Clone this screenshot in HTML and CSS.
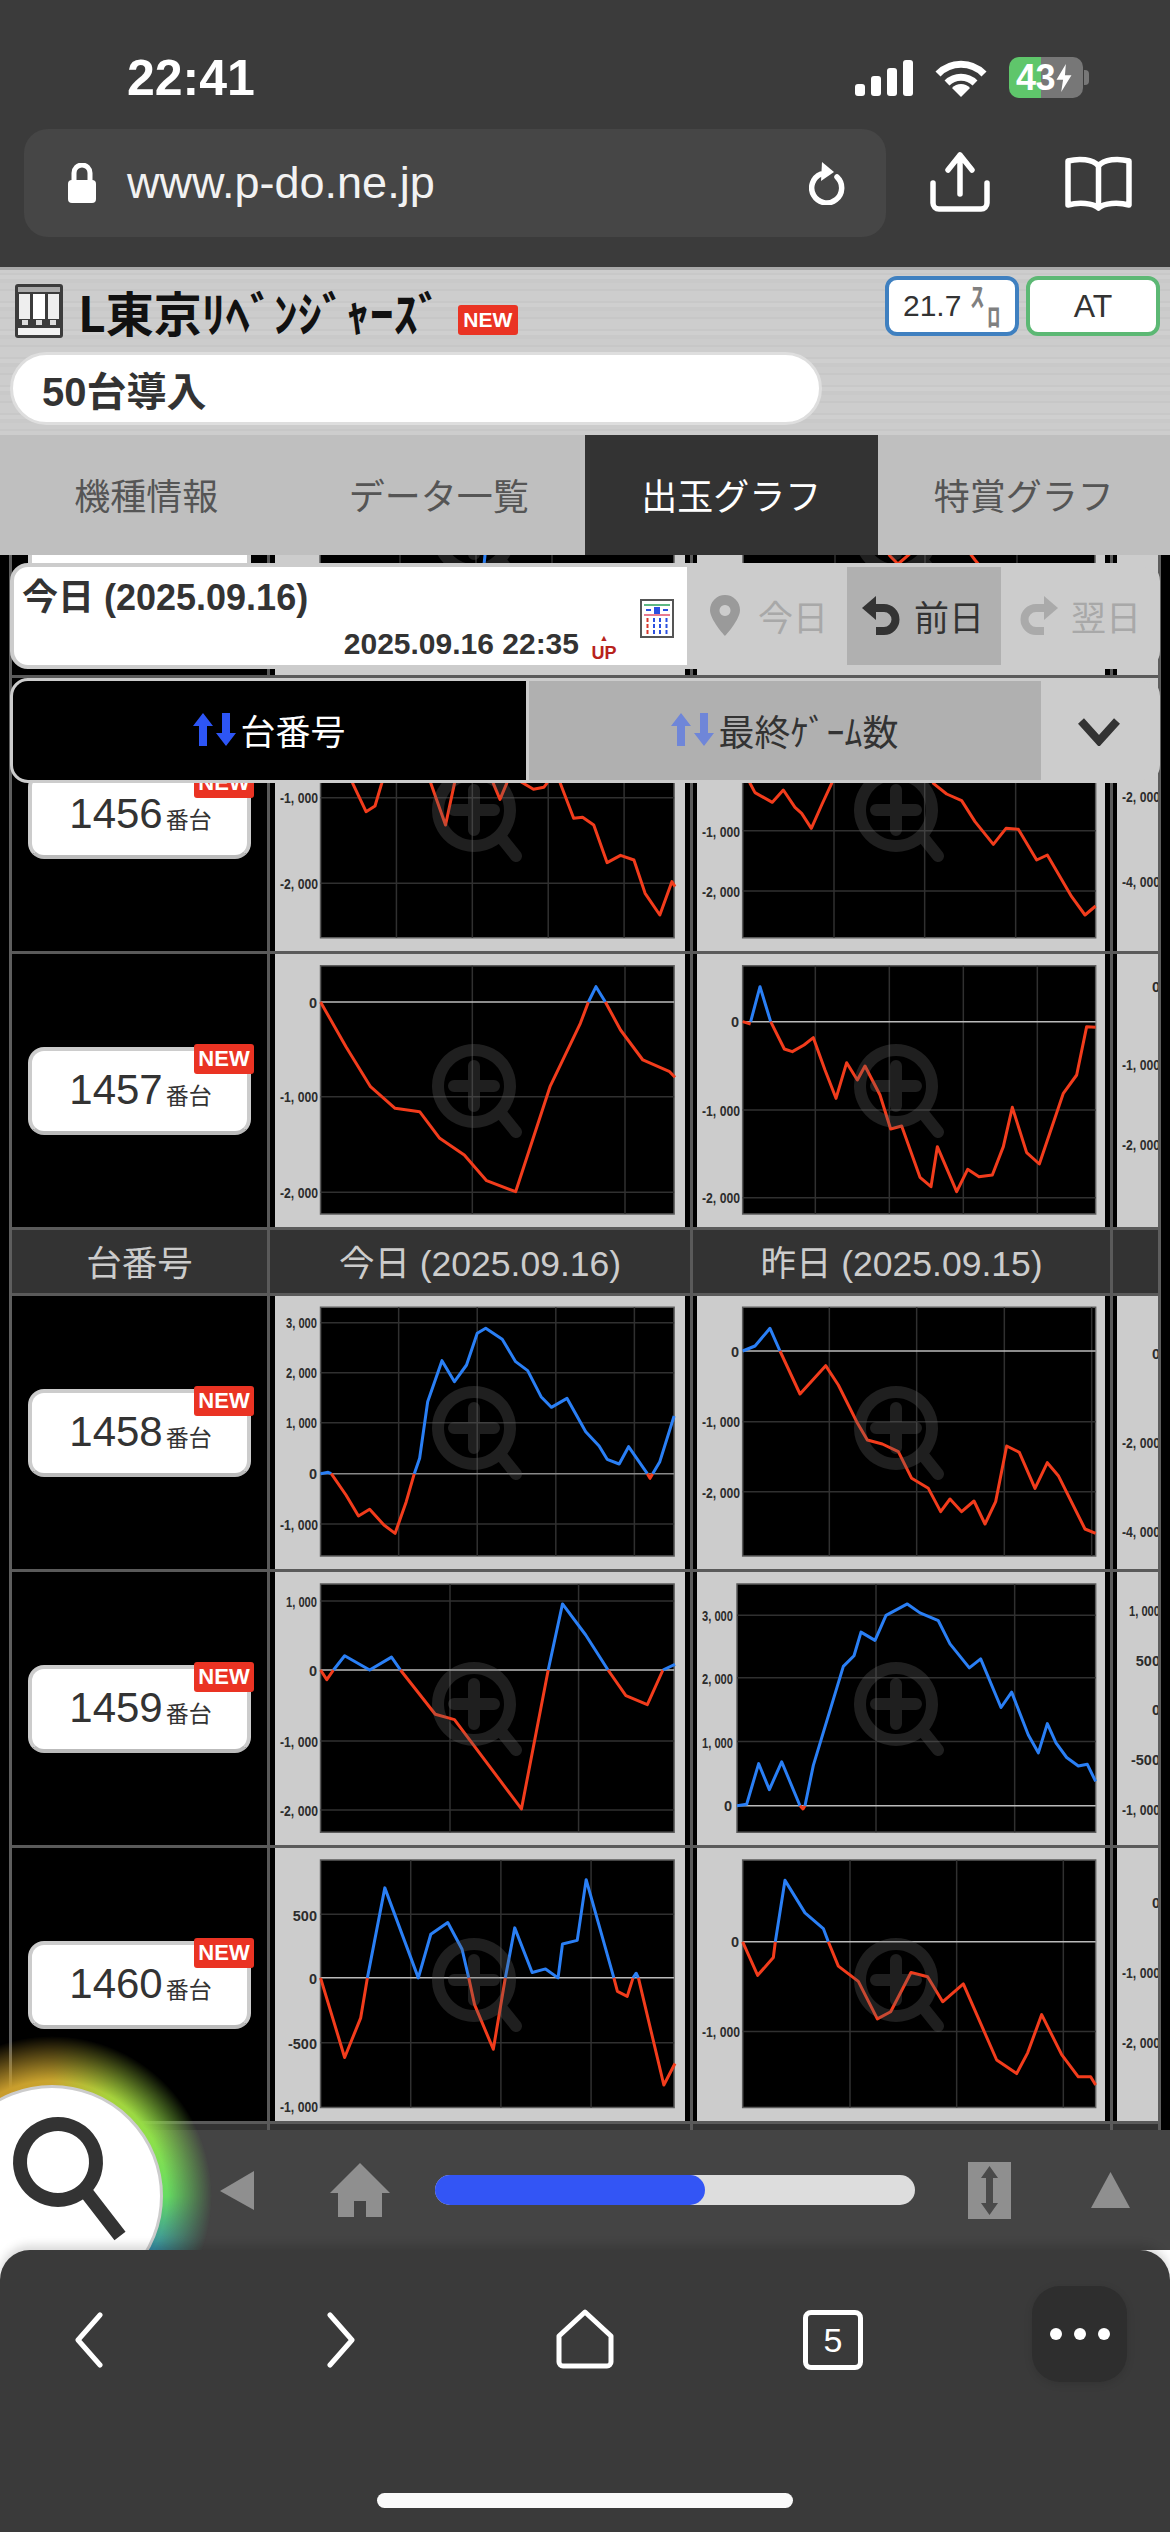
FILE: index.html
```html
<!DOCTYPE html>
<html lang="ja">
<head>
<meta charset="utf-8">
<title>L東京リベンジャーズ 出玉グラフ</title>
<link rel="stylesheet" href="styles.css">
</head>
<body>
<svg class="defs" width="0" height="0" aria-hidden="true">
  <symbol id="mag" viewBox="0 0 90 96">
    <g class="mag-g">
      <path d="M42 6a36 36 0 1 0 .01 0ZM22 42H62M42 22V62M68 68L84 88"/>
    </g>
  </symbol>
</svg>
<div class="app">
  <div class="top">
    <div class="status">
      <span class="time">22:41</span>
      <div class="status-icons">
        <svg class="signal" viewBox="0 0 58 36"><rect x="0" y="24" width="10" height="12" rx="3"/><rect x="16" y="16" width="10" height="20" rx="3"/><rect x="32" y="8" width="10" height="28" rx="3"/><rect x="48" y="0" width="10" height="36" rx="3"/></svg>
        <svg class="wifi" viewBox="0 0 52 38"><path class="wifi-arc" d="M3 15a32 32 0 0 1 46 0M12 24a20 20 0 0 1 28 0"/><path class="wifi-tip" d="M26 38L17 29a12 12 0 0 1 18 0Z"/></svg>
        <div class="battery"><span class="batt-num">43</span><svg class="bolt" viewBox="0 0 16 30"><path d="M10 0L0 17H7L5 30L16 12H9Z"/></svg></div>
      </div>
    </div>
    <div class="urlrow">
      <div class="urlbar">
        <svg class="lock" viewBox="0 0 30 40"><path class="lock-sh" d="M7 19V10a8 8 0 0 1 16 0V19"/><rect x="1" y="17" width="28" height="23" rx="4"/></svg>
        <span class="url">www.p-do.ne.jp</span>
        <svg class="reload" viewBox="0 0 36 44"><path class="ic-line" d="M12 13A15 15 0 1 0 28 16"/><path class="ic-fill" d="M13 1L25 11L12 20Z"/></svg>
      </div>
      <svg class="share" viewBox="0 0 60 60"><path class="ic-line" d="M3 31V51a6 6 0 0 0 6 6H51a6 6 0 0 0 6-6V31M30 3V42M18 18L30 3L42 18"/></svg>
      <svg class="book" viewBox="0 0 67 55"><path class="ic-line" d="M33.500 10C28 3 14 2 3 5V49C14 46 28 47 33.500 52C39 47 53 46 64 49V5C53 2 39 3 33.500 10ZM33.500 10V52"/></svg>
    </div>
  </div>
  <div class="strip"></div>
  <header class="header">
    <div class="title-row">
      <svg class="reel" viewBox="0 0 48 54"><rect width="48" height="54" rx="3" fill="#3c3c3c"/><rect x="3" y="3" width="42" height="5" fill="#aaa"/><rect x="4" y="10" width="11" height="25" fill="#eee"/><rect x="18" y="10" width="12" height="25" fill="#fff"/><rect x="33" y="10" width="11" height="25" fill="#eee"/><rect x="7" y="36" width="6" height="5" fill="#ddd"/><rect x="21" y="36" width="6" height="5" fill="#ddd"/><rect x="35" y="36" width="6" height="5" fill="#ddd"/><rect x="3" y="44" width="42" height="7" fill="#f2f2f2"/></svg>
      <h1 class="machine">L東京ﾘﾍﾞﾝｼﾞｬｰｽﾞ</h1>
      <span class="new new-title">NEW</span>
      <div class="specs">
        <div class="spec spec-blue"><span class="spec-num">21.7</span><span class="unit"><span class="unit-a">ｽ</span><span class="unit-b">ﾛ</span></span></div>
        <div class="spec spec-green">AT</div>
      </div>
    </div>
    <div class="pill">50台導入</div>
  </header>
  <nav class="tabs">
    <span class="tab">機種情報</span>
    <span class="tab">データ一覧</span>
    <span class="tab tab-on">出玉グラフ</span>
    <span class="tab">特賞グラフ</span>
  </nav>

  <main class="content">
    <div class="table">

      <div class="row">
        <div class="label"><div class="num"><span class="new new-num">NEW</span><span class="digits">1455</span><span class="ban">番台</span></div></div>
        <div class="cell c2"><svg class="chart-l" viewBox="275 402 410 273"><rect class="plot" x="320" y="414" width="354" height="248"/><path class="grid" d="M400 414V662M476 414V662M552 414V662"/><polyline class="blue" points="490,500 485,555 483,575"/><use href="#mag" x="432" y="492" width="90" height="96"/></svg></div>
        <div class="cell c3"><svg class="chart-r" viewBox="697 402 408 273"><rect class="plot" x="743" y="414" width="352" height="248"/><path class="grid" d="M835 414V662M925 414V662M1017 414V662"/><polyline class="red" points="880,540 890,556 898,564 912,552 920,540"/><polyline class="red" points="960,540 975,560 985,572"/><use href="#mag" x="854" y="492" width="90" height="96"/></svg></div>
        <div class="cell c4"></div>
      </div>

      <div class="row">
        <div class="label"><div class="num"><span class="new new-num">NEW</span><span class="digits">1456</span><span class="ban">番台</span></div></div>
        <div class="cell c2"><svg class="chart-l" viewBox="275 678 410 273">
          <g transform="matrix(.44643 0 0 .33333 0 770)">
            <rect class="plot" x="718" y="-240" width="792" height="743"/>
            <path class="grid" d="M888 -240V503M1058 -240V503M1228 -240V503M1398 -240V503M718 83H1510M718 340H1510"/>
            <polyline class="red" points="770,-100 790,40 820,125 840,108 855,40 880,-100 950,-100 965,40 998,165 1018,40 1040,-100 1095,-100 1105,40 1120,88 1135,40 1150,-100 1160,30 1195,58 1218,52 1225,40 1240,-100 1255,40 1285,145 1305,142 1330,165 1360,278 1390,256 1420,270 1445,370 1478,435 1505,335 1512,350"/>
          </g>
          <text class="lb" x="318" y="803" textLength="38" lengthAdjust="spacingAndGlyphs">-1, 000</text>
          <text class="lb" x="318" y="889" textLength="38" lengthAdjust="spacingAndGlyphs">-2, 000</text>
          <use href="#mag" x="432" y="768" width="90" height="96"/></svg></div>
        <div class="cell c3"><svg class="chart-r" viewBox="697 678 408 273">
          <g transform="matrix(.33333 0 0 .33333 650 770)">
            <rect class="plot" x="278" y="-240" width="1059" height="743"/>
            <path class="grid" d="M552 -240V503M824 -240V503M1097 -240V503M278 182H1337M278 363H1337"/>
            <polyline class="red" points="290,-100 300,40 315,68 367,97 400,60 435,112 455,130 484,175 515,105 545,40 560,-100 830,-100 850,40 890,72 935,92 975,155 1030,223 1068,175 1105,178 1160,270 1192,255 1265,380 1305,435 1337,408"/>
          </g>
          <text class="lb" x="740" y="837" textLength="38" lengthAdjust="spacingAndGlyphs">-1, 000</text>
          <text class="lb" x="740" y="897" textLength="38" lengthAdjust="spacingAndGlyphs">-2, 000</text>
          <use href="#mag" x="854" y="768" width="90" height="96"/></svg></div>
        <div class="cell c4"><svg class="chart-s" viewBox="1117 678 41 273">
          <text class="lb" x="1160" y="802" textLength="38" lengthAdjust="spacingAndGlyphs">-2, 000</text>
          <text class="lb" x="1160" y="887" textLength="38" lengthAdjust="spacingAndGlyphs">-4, 000</text></svg></div>
      </div>

      <div class="row">
        <div class="label"><div class="num"><span class="new new-num">NEW</span><span class="digits">1457</span><span class="ban">番台</span></div></div>
        <div class="cell c2"><svg class="chart-l" viewBox="275 954 410 273">
          <g transform="matrix(.44643 0 0 .33333 0 770)">
            <rect class="plot" x="718" y="587" width="792" height="745"/>
            <path class="grid" d="M1058 587V1332M1400 587V1332M718 980H1510M718 1267H1510"/>
            <path class="zero" d="M718 696H1510"/>
            <polyline class="red" points="718,696 775,830 830,950 885,1015 940,1025 985,1105 1040,1155 1090,1232 1155,1265 1232,950 1300,760 1318,696"/>
            <polyline class="blue" points="1318,696 1335,650 1356,696"/>
            <polyline class="red" points="1356,696 1390,780 1440,870 1500,905 1512,922"/>
          </g>
          <text class="lb" x="317" y="1008">0</text>
          <text class="lb" x="318" y="1102" textLength="38" lengthAdjust="spacingAndGlyphs">-1, 000</text>
          <text class="lb" x="318" y="1198" textLength="38" lengthAdjust="spacingAndGlyphs">-2, 000</text>
          <use href="#mag" x="432" y="1044" width="90" height="96"/></svg></div>
        <div class="cell c3"><svg class="chart-r" viewBox="697 954 408 273">
          <g transform="matrix(.33333 0 0 .33333 650 770)">
            <rect class="plot" x="278" y="587" width="1059" height="745"/>
            <path class="grid" d="M496 587V1332M718 587V1332M940 587V1332M1162 587V1332M278 1020H1337M278 1283H1337"/>
            <path class="zero" d="M278 755H1337"/>
            <polyline class="red" points="278,755 302,762"/>
            <polyline class="blue" points="302,755 330,650 362,755"/>
            <polyline class="red" points="362,755 403,837 427,845 462,825 490,803 525,900 558,985 590,878 622,930 645,888 690,975 722,1077 755,1068 810,1222 843,1250 862,1130 920,1265 953,1198 987,1220 1027,1215 1060,1130 1087,1012 1130,1148 1168,1182 1240,970 1280,915 1310,770 1337,772"/>
          </g>
          <text class="lb" x="739" y="1027">0</text>
          <text class="lb" x="740" y="1116" textLength="38" lengthAdjust="spacingAndGlyphs">-1, 000</text>
          <text class="lb" x="740" y="1203" textLength="38" lengthAdjust="spacingAndGlyphs">-2, 000</text>
          <use href="#mag" x="854" y="1044" width="90" height="96"/></svg></div>
        <div class="cell c4"><svg class="chart-s" viewBox="1117 954 41 273">
          <text class="lb" x="1160" y="992">0</text>
          <text class="lb" x="1160" y="1070" textLength="38" lengthAdjust="spacingAndGlyphs">-1, 000</text>
          <text class="lb" x="1160" y="1150" textLength="38" lengthAdjust="spacingAndGlyphs">-2, 000</text></svg></div>
      </div>

      <div class="row row-head">
        <div class="hcell">台番号</div>
        <div class="hcell hb c2h">今日 (2025.09.16)</div>
        <div class="hcell hb c3h">昨日 (2025.09.15)</div>
        <div class="hcell hb"></div>
      </div>

      <div class="row">
        <div class="label"><div class="num"><span class="new new-num">NEW</span><span class="digits">1458</span><span class="ban">番台</span></div></div>
        <div class="cell c2"><svg class="chart-l" viewBox="275 1296 410 273">
          <g transform="matrix(.44643 0 0 .33333 0 1270)">
            <rect class="plot" x="718" y="112" width="792" height="746"/>
            <path class="grid" d="M893 112V858M1069 112V858M1245 112V858M1421 112V858M718 158H1510M718 308H1510M718 458H1510M718 762H1510"/>
            <path class="zero zero-dim" d="M718 611H1510"/>
            <polyline class="blue" points="718,611 735,607 742,611"/>
            <polyline class="red" points="742,611 775,675 803,738 828,718 860,765 885,790 910,695 928,611"/>
            <polyline class="blue" points="928,611 940,565 958,395 990,272 1018,335 1045,285 1069,190 1088,175 1125,208 1155,275 1182,302 1212,380 1235,412 1270,385 1312,485 1342,528 1360,568 1387,582 1408,530 1450,611"/>
            <polyline class="red" points="1450,611 1456,625 1462,611"/>
            <polyline class="blue" points="1462,611 1478,575 1510,438"/>
          </g>
          <text class="lb" x="317" y="1328" textLength="31" lengthAdjust="spacingAndGlyphs">3, 000</text>
          <text class="lb" x="317" y="1378" textLength="31" lengthAdjust="spacingAndGlyphs">2, 000</text>
          <text class="lb" x="317" y="1428" textLength="31" lengthAdjust="spacingAndGlyphs">1, 000</text>
          <text class="lb" x="317" y="1479">0</text>
          <text class="lb" x="318" y="1530" textLength="38" lengthAdjust="spacingAndGlyphs">-1, 000</text>
          <use href="#mag" x="432" y="1386" width="90" height="96"/></svg></div>
        <div class="cell c3"><svg class="chart-r" viewBox="697 1296 408 273">
          <g transform="matrix(.33333 0 0 .33333 650 1270)">
            <rect class="plot" x="278" y="112" width="1059" height="746"/>
            <path class="grid" d="M538 112V858M800 112V858M1063 112V858M1325 112V858M278 455H1337M278 665H1337"/>
            <path class="zero" d="M278 243H1337"/>
            <polyline class="blue" points="278,243 315,228 360,175 390,243"/>
            <polyline class="red" points="390,243 450,372 527,287 565,345 620,455 652,510 697,522 745,545 785,625 835,655 872,725 900,687 935,725 972,693 1005,762 1037,695 1070,528 1108,547 1155,655 1192,578 1225,617 1305,777 1337,790"/>
          </g>
          <text class="lb" x="739" y="1357">0</text>
          <text class="lb" x="740" y="1427" textLength="38" lengthAdjust="spacingAndGlyphs">-1, 000</text>
          <text class="lb" x="740" y="1498" textLength="38" lengthAdjust="spacingAndGlyphs">-2, 000</text>
          <use href="#mag" x="854" y="1386" width="90" height="96"/></svg></div>
        <div class="cell c4"><svg class="chart-s" viewBox="1117 1296 41 273">
          <text class="lb" x="1160" y="1359">0</text>
          <text class="lb" x="1160" y="1448" textLength="38" lengthAdjust="spacingAndGlyphs">-2, 000</text>
          <text class="lb" x="1160" y="1537" textLength="38" lengthAdjust="spacingAndGlyphs">-4, 000</text></svg></div>
      </div>

      <div class="row">
        <div class="label"><div class="num"><span class="new new-num">NEW</span><span class="digits">1459</span><span class="ban">番台</span></div></div>
        <div class="cell c2"><svg class="chart-l" viewBox="275 1572 410 273">
          <g transform="matrix(.44643 0 0 .35714 0 1560)">
            <rect class="plot" x="718" y="67" width="792" height="695"/>
            <path class="grid" d="M1008 67V762M1296 67V762M718 115H1510M718 507H1510M718 700H1510"/>
            <path class="zero" d="M718 308H1510"/>
            <polyline class="red" points="718,308 732,335 747,308"/>
            <polyline class="blue" points="747,308 772,268 828,308 877,272 897,308"/>
            <polyline class="red" points="897,308 975,432 1018,447 1168,697 1228,308"/>
            <polyline class="blue" points="1228,308 1260,123 1312,210 1362,308"/>
            <polyline class="red" points="1362,308 1402,380 1450,405 1485,308"/>
            <polyline class="blue" points="1485,308 1512,292"/>
          </g>
          <text class="lb" x="317" y="1607" textLength="31" lengthAdjust="spacingAndGlyphs">1, 000</text>
          <text class="lb" x="317" y="1676">0</text>
          <text class="lb" x="318" y="1747" textLength="38" lengthAdjust="spacingAndGlyphs">-1, 000</text>
          <text class="lb" x="318" y="1816" textLength="38" lengthAdjust="spacingAndGlyphs">-2, 000</text>
          <use href="#mag" x="432" y="1662" width="90" height="96"/></svg></div>
        <div class="cell c3"><svg class="chart-r" viewBox="697 1572 408 273">
          <g transform="matrix(.33333 0 0 .35714 650 1560)">
            <rect class="plot" x="261" y="67" width="1076" height="695"/>
            <path class="grid" d="M678 67V762M1094 67V762M261 155H1337M261 330H1337M261 508H1337"/>
            <path class="zero" d="M261 688H1337"/>
            <polyline class="blue" points="261,688 290,684 326,570 358,643 395,565 450,688"/>
            <polyline class="red" points="450,688 459,697 465,688"/>
            <polyline class="blue" points="465,688 490,575 580,298 612,268 633,202 675,225 708,155 772,123 810,148 865,170 900,235 958,302 992,277 1053,413 1085,370 1135,490 1165,540 1192,458 1218,512 1250,553 1285,577 1312,572 1337,620"/>
          </g>
          <text class="lb" x="733" y="1621" textLength="31" lengthAdjust="spacingAndGlyphs">3, 000</text>
          <text class="lb" x="733" y="1684" textLength="31" lengthAdjust="spacingAndGlyphs">2, 000</text>
          <text class="lb" x="733" y="1748" textLength="31" lengthAdjust="spacingAndGlyphs">1, 000</text>
          <text class="lb" x="732" y="1811">0</text>
          <use href="#mag" x="854" y="1662" width="90" height="96"/></svg></div>
        <div class="cell c4"><svg class="chart-s" viewBox="1117 1572 41 273">
          <text class="lb" x="1160" y="1616" textLength="31" lengthAdjust="spacingAndGlyphs">1, 000</text>
          <text class="lb" x="1160" y="1666">500</text>
          <text class="lb" x="1160" y="1715">0</text>
          <text class="lb" x="1160" y="1765">-500</text>
          <text class="lb" x="1160" y="1815" textLength="38" lengthAdjust="spacingAndGlyphs">-1, 000</text></svg></div>
      </div>

      <div class="row">
        <div class="label"><div class="num"><span class="new new-num">NEW</span><span class="digits">1460</span><span class="ban">番台</span></div></div>
        <div class="cell c2"><svg class="chart-l" viewBox="275 1848 410 273">
          <g transform="matrix(.44643 0 0 .35714 0 1560)">
            <rect class="plot" x="718" y="840" width="792" height="693"/>
            <path class="grid" d="M920 840V1533M1122 840V1533M1324 840V1533M718 992H1510M718 1352H1510"/>
            <path class="zero" d="M718 1170H1510"/>
            <polyline class="red" points="718,1170 772,1393 808,1282 823,1170"/>
            <polyline class="blue" points="823,1170 862,918 937,1170 965,1048 1003,1015 1035,1090 1050,1170"/>
            <polyline class="red" points="1050,1170 1063,1245 1105,1370 1132,1170"/>
            <polyline class="blue" points="1132,1170 1153,1030 1192,1155 1222,1145 1250,1170 1260,1075 1293,1065 1313,895 1375,1170"/>
            <polyline class="red" points="1375,1170 1383,1208 1405,1222 1418,1170"/>
            <polyline class="blue" points="1418,1170 1425,1157 1430,1170"/>
            <polyline class="red" points="1430,1170 1487,1470 1512,1410"/>
          </g>
          <text class="lb" x="317" y="1921">500</text>
          <text class="lb" x="317" y="1984">0</text>
          <text class="lb" x="317" y="2049">-500</text>
          <text class="lb" x="318" y="2112" textLength="38" lengthAdjust="spacingAndGlyphs">-1, 000</text>
          <use href="#mag" x="432" y="1938" width="90" height="96"/></svg></div>
        <div class="cell c3"><svg class="chart-r" viewBox="697 1848 408 273">
          <g transform="matrix(.33333 0 0 .35714 650 1560)">
            <rect class="plot" x="278" y="840" width="1059" height="693"/>
            <path class="grid" d="M600 840V1533M920 840V1533M1240 840V1533M278 1320H1337"/>
            <path class="zero" d="M278 1069H1337"/>
            <polyline class="red" points="278,1069 323,1163 370,1113 376,1069"/>
            <polyline class="blue" points="376,1069 405,897 465,988 520,1032 535,1069"/>
            <polyline class="red" points="535,1069 565,1137 625,1180 682,1285 722,1265 783,1155 833,1167 878,1237 940,1187 1040,1400 1100,1438 1133,1380 1175,1273 1235,1385 1285,1447 1322,1447 1337,1470"/>
          </g>
          <text class="lb" x="739" y="1947">0</text>
          <text class="lb" x="740" y="2037" textLength="38" lengthAdjust="spacingAndGlyphs">-1, 000</text>
          <use href="#mag" x="854" y="1938" width="90" height="96"/></svg></div>
        <div class="cell c4"><svg class="chart-s" viewBox="1117 1848 41 273">
          <text class="lb" x="1160" y="1908">0</text>
          <text class="lb" x="1160" y="1978" textLength="38" lengthAdjust="spacingAndGlyphs">-1, 000</text>
          <text class="lb" x="1160" y="2048" textLength="38" lengthAdjust="spacingAndGlyphs">-2, 000</text></svg></div>
      </div>

      <div class="row row-head">
        <div class="hcell"></div><div class="hcell hb"></div><div class="hcell hb"></div><div class="hcell hb"></div>
      </div>
    </div>

    <section class="date-panel">
      <div class="date-info">
        <div class="date-title">今日 (2025.09.16)</div>
        <div class="date-stamp"><span>2025.09.16 22:35</span><span class="up"><span class="up-arrow">▲</span><span class="up-text">UP</span></span></div>
        <svg class="cal" viewBox="0 0 34 39"><rect x="1" y="1" width="32" height="37" fill="#fff" stroke="#555" stroke-width="2"/><rect x="4" y="5" width="26" height="2" fill="#5cb884"/><rect x="14" y="8" width="6" height="7" fill="#2b50e0"/><rect x="6" y="10" width="5" height="2" fill="#2b50e0"/><rect x="23" y="10" width="5" height="2" fill="#2b50e0"/><rect x="4" y="15" width="26" height="2" fill="#e87a90"/><path d="M7.500 19V23M7.500 25V29M7.500 31V35" stroke="#d9352a" stroke-width="2"/><path d="M14 19V23M14 25V29M14 31V35M20 19V23M20 25V29M20 31V35M26.500 19V23M26.500 25V29M26.500 31V35" stroke="#2b50e0" stroke-width="2"/></svg>
      </div>
      <div class="day day-a">
        <svg class="pin" viewBox="0 0 30 41"><path fill-rule="evenodd" d="M15 0A15 15 0 0 0 0 15C0 25 15 41 15 41S30 25 30 15A15 15 0 0 0 15 0ZM15 10a5.500 5.500 0 1 1-.01 0Z"/></svg>
        <span>今日</span>
      </div>
      <div class="day day-on">
        <svg class="uturn" viewBox="0 0 38 42"><path class="uturn-l" d="M10 14H22a11 11 0 0 1 0 23H14"/><path class="uturn-h" d="M0 14L14 2V26Z"/></svg>
        <span>前日</span>
      </div>
      <div class="day day-c">
        <svg class="uturn uturn-m" viewBox="0 0 38 42"><path class="uturn-l" d="M10 14H22a11 11 0 0 1 0 23H14"/><path class="uturn-h" d="M0 14L14 2V26Z"/></svg>
        <span>翌日</span>
      </div>
    </section>

    <section class="sort-panel">
      <div class="sort sort-on">
        <svg class="sort-ic" viewBox="0 0 43 33"><path d="M10 0L20 13H14V33H6V13H0Z"/><path d="M33 33L23 20H29V0H37V20H43Z"/></svg>
        <span>台番号</span>
      </div>
      <div class="sort sort-off">
        <svg class="sort-ic sort-ic-dim" viewBox="0 0 43 33"><path d="M10 0L20 13H14V33H6V13H0Z"/><path d="M33 33L23 20H29V0H37V20H43Z"/></svg>
        <span>最終ｹﾞｰﾑ数</span>
      </div>
      <div class="sort-more"><svg class="chev" viewBox="0 0 44 30"><path d="M4 5L22 25L40 5"/></svg></div>
    </section>
  </main>

  <div class="navbar">
    <svg class="nav-left" viewBox="0 0 34 39"><path d="M34 0V39L0 20Z"/></svg>
    <svg class="nav-home" viewBox="0 0 60 54"><path d="M30 0L60 30H52V54H36V38H24V54H8V30H0Z"/></svg>
    <div class="progress"><div class="progress-fill"></div></div>
    <svg class="nav-ud" viewBox="0 0 43 57"><rect width="43" height="57"/><path class="ud-a" d="M21.500 4L30 16H25V41H30L21.500 53L13 41H18V16H13Z"/></svg>
    <svg class="nav-up" viewBox="0 0 39 36"><path d="M19.500 0L39 36H0Z"/></svg>
  </div>

  <div class="toolbar-wrap">
    <div class="toolbar">
      <div class="tool-row">
        <svg class="tb-back" viewBox="0 0 28 56"><path class="tb-line" d="M25 3L3 28L25 53"/></svg>
        <svg class="tb-fwd" viewBox="0 0 28 56"><path class="tb-line" d="M3 3L25 28L3 53"/></svg>
        <svg class="tb-home" viewBox="0 0 58 60"><path class="tb-line" d="M29 3L55 27V53a4 4 0 0 1-4 4H7a4 4 0 0 1-4-4V27Z"/></svg>
        <div class="tb-tabs">5</div>
        <div class="tb-menu"><i></i><i></i><i></i></div>
      </div>
      <div class="indicator"></div>
    </div>
  </div>

  <div class="glow"></div>
  <div class="fab">
    <svg class="fab-mag" viewBox="0 0 120 130"><path d="M46 8a38 38 0 1 0 .01 0ZM74 76L108 120"/></svg>
  </div>
</div>
</body>
</html>
```

FILE: styles.css
```css
* { box-sizing: border-box; }
html, body { margin: 0; padding: 0; background: #000; }
body { font-family: "Liberation Sans", "Noto Sans CJK JP", sans-serif; }
.defs { position: absolute; }
.app { position: relative; width: 1170px; height: 2532px; overflow: hidden; display: flex; flex-direction: column; background: #000; }

/* browser top */
.top { height: 267px; background: #3b3b3b; color: #fff; flex: none; }
.status { height: 129px; display: flex; align-items: flex-start; padding: 52px 87px 0 127px; }
.time { font-size: 50px; line-height: 52px; font-weight: 700; letter-spacing: 0; }
.status-icons { margin-left: auto; display: flex; align-items: flex-start; padding-top: 5px; }
.signal { width: 58px; height: 36px; margin-top: 3px; fill: #fff; }
.wifi { width: 52px; height: 38px; margin: 2px 0 0 22px; }
.wifi-arc { fill: none; stroke: #fff; stroke-width: 7; }
.wifi-tip { fill: #fff; }
.battery { position: relative; width: 74px; height: 41px; margin-left: 22px; border-radius: 10px; background: linear-gradient(90deg, #5fc66b 0 32px, #777 32px); display: flex; align-items: center; padding-left: 7px; }
.battery::after { content: ""; position: absolute; right: -6px; top: 13px; width: 5px; height: 15px; border-radius: 0 4px 4px 0; background: #777; }
.batt-num { font-size: 36px; font-weight: 700; color: #fff; letter-spacing: -.5px; line-height: 41px; }
.bolt { width: 16px; height: 28px; margin-left: 1px; fill: #fff; }
.urlrow { display: flex; align-items: flex-start; padding-left: 24px; }
.urlbar { width: 862px; height: 108px; border-radius: 24px; background: #464646; display: flex; align-items: center; }
.lock { width: 30px; height: 40px; margin-left: 43px; fill: #fff; }
.lock-sh { fill: none; stroke: #fff; stroke-width: 5; }
.url { font-size: 45px; margin-left: 30px; color: #f2f2f2; }
.reload { width: 36px; height: 44px; margin-left: auto; margin-right: 41px; }
.ic-line { fill: none; stroke: #fff; stroke-width: 5.500; stroke-linecap: round; stroke-linejoin: round; }
.ic-fill { fill: #fff; }
.share { width: 60px; height: 60px; margin: 23px 0 0 44px; }
.book { width: 67px; height: 55px; margin: 27px 0 0 75px; }
.strip { height: 3px; background: #a9a9a9; flex: none; }

/* page header */
.header { height: 165px; flex: none; background: repeating-linear-gradient(180deg, #cdcdcd 0 3px, #c8c8c8 3px 5px, #cfcfcf 5px 9px, #c9c9c9 9px 13px, #cccccc 13px 19px, #c7c7c7 19px 21px, #cdcdcd 21px 28px); }
.title-row { height: 82px; display: flex; align-items: flex-start; padding-left: 15px; }
.reel { width: 48px; height: 54px; margin-top: 14px; flex: none; }
.machine { margin: 12px 0 0 15px; font-family: "Noto Sans CJK JP", sans-serif; font-size: 48px; line-height: 58px; font-weight: 700; color: #111; white-space: nowrap; }
.new { display: flex; align-items: center; justify-content: center; background: #ea3323; color: #fff; font-family: "Liberation Sans", sans-serif; font-weight: 700; border-radius: 3px; }
.new-title { width: 60px; height: 30px; font-size: 21px; margin: 35px 0 0 16px; }
.specs { margin-left: auto; display: flex; gap: 7px; padding: 6px 10px 0 0; }
.spec { width: 134px; height: 60px; border-radius: 12px; background: #fff; display: flex; align-items: center; justify-content: center; color: #333; font-size: 32px; }
.spec-blue { border: 4px solid #3f80c0; justify-content: flex-start; padding-left: 14px; }
.spec-green { border: 4px solid #5cb874; }
.spec-num { font-size: 30px; }
.unit { display: flex; flex-direction: column; width: 30px; margin-left: 9px; color: #808080; font-family: "Noto Sans CJK JP", sans-serif; font-weight: 700; font-size: 27px; line-height: 20px; }
.unit-a { align-self: flex-start; }
.unit-b { align-self: flex-end; }
.pill { width: 812px; height: 73px; margin-left: 10px; border: 3px solid #dedede; border-radius: 37px; background: #fff; display: flex; align-items: center; padding-left: 29px; font-family: "Liberation Sans", "Noto Sans CJK JP", sans-serif; font-weight: 700; font-size: 40px; color: #333; }

/* tabs */
.tabs { height: 120px; flex: none; display: grid; grid-template-columns: repeat(4, 292.500px); background: #bfbfbf; }
.tab { display: flex; align-items: center; justify-content: center; padding-bottom: 3px; font-family: "Noto Sans CJK JP", sans-serif; font-size: 36px; color: #555; white-space: nowrap; }
.tab-on { background: #333; color: #fff; }

/* table */
.content { position: relative; height: 1575px; flex: none; overflow: hidden; background: #000; }
.table { width: 1152px; margin: -156px 0 0 9px; border-left: 3px solid #5e5e5e; border-right: 3px solid #5e5e5e; }
.row { display: grid; grid-template-columns: 255px 423px 420px 48px; height: 276px; border-top: 3px solid #5a5a5a; background: #000; }
.label { display: flex; align-items: flex-start; justify-content: center; padding-top: 93px; }
.num { position: relative; width: 223px; height: 88px; border: 4px solid #ccc; border-bottom-color: #bbb; border-radius: 16px; background: #fff; display: flex; align-items: baseline; justify-content: center; padding-top: 14px; padding-left: 2px; color: #333; }
.digits { font-size: 42px; line-height: 50px; }
.ban { font-family: "Noto Sans CJK JP", sans-serif; font-size: 23px; margin-left: 3px; }
.new-num { position: absolute; right: -7px; top: -7px; width: 60px; height: 30px; font-size: 22px; }
.cell { border-left: 3px solid #5a5a5a; height: 273px; }
.c2 { padding: 0 5px; }
.c3 { padding: 0 5px 0 4px; }
.c4 { padding-left: 4px; }
.c4:empty::before { content: ""; display: block; height: 273px; background: #ccc; }
.chart-l, .chart-r, .chart-s { display: block; height: 273px; background: #ccc; }
.chart-l { width: 410px; }
.chart-r { width: 408px; }
.chart-s { width: 41px; }
.plot { fill: #000; stroke: #5c5c5c; stroke-width: 1.500; vector-effect: non-scaling-stroke; }
.grid { fill: none; stroke: #303030; stroke-width: 1.500; vector-effect: non-scaling-stroke; }
.zero { fill: none; stroke: #bbb; stroke-width: 1.500; vector-effect: non-scaling-stroke; }
.zero-dim { stroke: #888; }
.red, .blue { fill: none; stroke-width: 3; stroke-linejoin: round; vector-effect: non-scaling-stroke; }
.red { stroke: #f23c1c; }
.blue { stroke: #2a7ff5; }
.lb { font-family: "Liberation Sans", sans-serif; font-weight: 700; font-size: 14.500px; fill: #2c2c2c; text-anchor: end; }
.mag-g { fill: none; stroke: #666; stroke-width: 12; stroke-linecap: round; opacity: .3; }
.row-head { height: 66px; background: #333; }
.hcell { display: flex; align-items: center; justify-content: center; height: 63px; padding-bottom: 3px; background: #333; color: #ccc; font-family: "Liberation Sans", "Noto Sans CJK JP", sans-serif; font-size: 35.500px; white-space: nowrap; }
.hb { border-left: 3px solid #5a5a5a; }

/* date panel */
.date-panel { position: absolute; left: 10px; top: 8px; width: 1150px; height: 106px; border: 4px solid #ccc; border-radius: 18px; background: #ccc; overflow: hidden; display: flex; }
.date-info { position: relative; width: 673px; background: #fff; color: #333; padding-left: 8px; flex: none; }
.date-title { font-size: 36px; line-height: 44px; font-weight: 700; margin-top: 9px; font-family: "Liberation Sans", "Noto Sans CJK JP", sans-serif; white-space: nowrap; }
.date-stamp { display: flex; justify-content: flex-end; align-items: flex-end; padding-right: 69px; font-size: 30px; line-height: 36px; font-weight: 700; margin-top: 6px; }
.up { display: flex; flex-direction: column; align-items: center; color: #b8231c; margin-left: 11px; width: 28px; }
.up-arrow { font-size: 9px; line-height: 11px; }
.up-text { font-size: 18px; line-height: 18px; }
.cal { position: absolute; right: 13px; top: 32px; width: 34px; height: 39px; }
.day { display: flex; align-items: center; padding-bottom: 2px; font-family: "Noto Sans CJK JP", sans-serif; font-size: 35px; color: #a8a8a8; }
.day-a { width: 160px; padding-left: 23px; gap: 18px; }
.day-on { width: 154px; padding-left: 15px; gap: 14px; background: #b0b0b0; color: #333; }
.day-c { width: 155px; padding-left: 19px; gap: 13px; }
.pin { width: 30px; height: 41px; fill: #9a9a9a; }
.uturn { width: 38px; height: 42px; }
.uturn-l { fill: none; stroke: #333; stroke-width: 8; }
.uturn-h { fill: #333; }
.uturn-m { transform: scaleX(-1); }
.uturn-m .uturn-l { stroke: #aaa; }
.uturn-m .uturn-h { fill: #aaa; }

/* sort panel */
.sort-panel { position: absolute; left: 10px; top: 123px; width: 1150px; height: 105px; border: 3px solid #ccc; border-radius: 18px; background: #ccc; overflow: hidden; display: flex; }
.sort { display: flex; align-items: center; justify-content: center; font-family: "Noto Sans CJK JP", sans-serif; font-size: 35px; gap: 4px; padding-bottom: 2px; }
.sort-on { width: 513px; background: #000; color: #fff; }
.sort-off { width: 512px; margin-left: 3px; background: #b0b0b0; color: #333; font-size: 36px; }
.sort-ic { width: 43px; height: 33px; fill: #2d55f5; }
.sort-ic-dim { fill: #6f86d8; }
.sort-more { flex: 1; display: flex; align-items: center; justify-content: center; }
.chev { width: 44px; height: 30px; fill: none; stroke: #333; stroke-width: 8; }

/* page nav */
.navbar { height: 120px; flex: none; background: #444; display: flex; align-items: center; padding-left: 220px; position: relative; }
.nav-left { width: 34px; height: 39px; fill: #8f8f8f; }
.nav-home { width: 60px; height: 54px; margin-left: 76px; fill: #8f8f8f; }
.progress { width: 480px; height: 30px; margin-left: 45px; border-radius: 15px; background: #ddd; overflow: hidden; }
.progress-fill { width: 270px; height: 30px; border-radius: 0 15px 15px 0; background: #3355f5; }
.nav-ud { width: 43px; height: 57px; margin-left: 53px; fill: #8f8f8f; }
.ud-a { fill: #4a4a4a; }
.nav-up { width: 39px; height: 36px; margin-left: 80px; fill: #8f8f8f; }

/* bottom toolbar */
.toolbar-wrap { flex: 1; background: #fff; position: relative; z-index: 3; }
.toolbar { height: 282px; background: #3a3a3a; border-radius: 30px 30px 0 0; padding-top: 36px; box-shadow: 0 -5px 10px rgba(0, 0, 0, .15); }
.tool-row { position: relative; display: flex; align-items: flex-start; height: 96px; padding-left: 75px; }
.tb-line { fill: none; stroke: #fff; stroke-width: 5; stroke-linecap: round; stroke-linejoin: round; }
.tb-back, .tb-fwd { width: 28px; height: 56px; margin-top: 26px; }
.tb-fwd { margin-left: 224px; }
.tb-home { width: 58px; height: 60px; margin: 23px 0 0 201px; }
.tb-tabs { width: 60px; height: 60px; margin: 24px 0 0 189px; border: 5px solid #fff; border-radius: 8px; color: #fff; font-size: 34px; display: flex; align-items: center; justify-content: center; }
.tb-menu { width: 95px; height: 96px; margin-left: 169px; border-radius: 28px; background: #2e2e2e; display: flex; align-items: center; justify-content: center; gap: 12px; padding-bottom: 0; box-shadow: 0 2px 8px rgba(0, 0, 0, .12); }
.tb-menu i { display: block; width: 12px; height: 12px; border-radius: 50%; background: #fff; }
.indicator { width: 416px; height: 15px; margin: 111px auto 0; border-radius: 8px; background: #fafafa; }

/* search button */
.glow { position: absolute; left: -108px; top: 2036px; width: 320px; height: 320px; border-radius: 50%; z-index: 1; background: conic-gradient(#c9a52f 0deg, #a8d23c 30deg, #8fe04a 60deg, #66dc62 90deg, #2f7fae 122deg, #2a5fb0 150deg, #c9902a 300deg, #c9a52f 360deg); -webkit-mask-image: radial-gradient(circle closest-side, #000 72%, transparent 100%); mask-image: radial-gradient(circle closest-side, #000 72%, transparent 100%); }
.fab { position: absolute; left: -59px; top: 2085px; width: 222px; height: 222px; border-radius: 50%; background: #fff; border: 3px solid #ccc; z-index: 2; }
.fab-mag { position: absolute; left: 68px; top: 28px; width: 120px; height: 130px; fill: none; stroke: #333; stroke-width: 14; stroke-linecap: butt; }
```
